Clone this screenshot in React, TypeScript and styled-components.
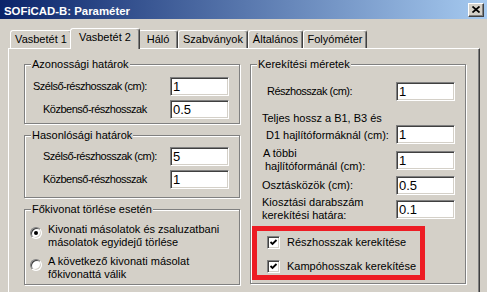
import React, { FC } from "react";
import styled, { createGlobalStyle } from "styled-components";

const GlobalStyle = createGlobalStyle`
  html, body {
    margin: 0;
    padding: 0;
    background: #d4d0c8;
  }
  body {
    font-family: "Liberation Sans", Arial, sans-serif;
    font-size: 11px;
    color: #000;
  }
`;

const Window = styled.div`
  width: 487px;
  height: 292px;
  overflow: hidden;
  background: #d4d0c8;
  display: flex;
  flex-direction: column;
`;

const TitleBar = styled.div`
  flex: none;
  height: 19px;
  display: flex;
  align-items: center;
  justify-content: space-between;
  padding: 0 3px 0 4px;
  background: linear-gradient(to right, #0a246a, #a6caf0);
`;

const Title = styled.span`
  color: #fff;
  font-weight: bold;
  font-size: 11.4px;
  line-height: 13px;
  padding-top: 3px;
`;

const CloseButton = styled.div`
  width: 16px;
  height: 14px;
  box-sizing: border-box;
  display: flex;
  align-items: center;
  justify-content: center;
  background: #d4d0c8;
  border: 1px solid;
  border-color: #fff #404040 #404040 #fff;
  box-shadow: inset -1px -1px 0 #808080;
`;

const TabStrip = styled.div`
  display: flex;
  align-items: flex-end;
  height: 20px;
  margin: 9px 0 0 10px;
`;

const Tab = styled.div<{ $w: number; $active?: boolean }>`
  position: relative;
  z-index: ${(p) => (p.$active ? 2 : 1)};
  box-sizing: border-box;
  width: ${(p) => p.$w + (p.$active ? 4 : 0)}px;
  height: ${(p) => (p.$active ? 21 : 18)}px;
  margin: 0 ${(p) => (p.$active ? -2 : 0)}px ${(p) => (p.$active ? -1 : 0)}px;
  padding-bottom: ${(p) => (p.$active ? 3 : 0)}px;
  display: flex;
  align-items: center;
  justify-content: center;
  white-space: nowrap;
  background: #d4d0c8;
  border: 1px solid;
  border-bottom: none;
  border-color: #fff #404040 transparent #fff;
  border-radius: 3px 3px 0 0;
  box-shadow: inset -1px 0 0 #808080;
  line-height: 13px;
`;

const TabPage = styled.div`
  margin-left: 8px;
  width: 472px;
  box-sizing: border-box;
  border-top: 1px solid #fff;
  border-left: 1px solid #fff;
  border-right: 1px solid #404040;
  box-shadow: inset -1px 0 0 #808080;
  padding: 9px 0 30px 15px;
  display: grid;
  grid-template-columns: 216px 216px;
  column-gap: 10px;
  align-items: start;
`;

const Column = styled.div`
  display: flex;
  flex-direction: column;
`;

const Group = styled.fieldset<{
  $inset: number;
  $right: number;
  $pt: number;
  $pb: number;
  $mt?: number;
}>`
  margin: ${(p) => p.$mt ?? 0}px 0 0;
  min-width: 0;
  padding: ${(p) => `${p.$pt}px ${p.$right}px ${p.$pb}px ${p.$inset}px`};
  border: 1px solid #808080;
  box-shadow: inset 1px 1px 0 #fff, 1px 1px 0 #fff;

  & > legend {
    margin-left: ${(p) => 6 - p.$inset}px;
    padding: 0 1px;
    font-size: 11px;
    line-height: 13px;
    background: #d4d0c8;
  }
`;

const FieldRow = styled.div<{ $mt?: number; $align?: string }>`
  display: flex;
  align-items: ${(p) => p.$align ?? "center"};
  margin-top: ${(p) => p.$mt ?? 0}px;
`;

const Label = styled.div<{
  $indent?: number;
  $lh?: number;
  $pt?: number;
  $tight?: boolean;
}>`
  flex: 1;
  min-width: 0;
  white-space: nowrap;
  padding-left: ${(p) => p.$indent ?? 0}px;
  padding-top: ${(p) => p.$pt ?? 0}px;
  line-height: ${(p) => p.$lh ?? 13}px;
  letter-spacing: ${(p) => (p.$tight ? "-0.5px" : "normal")};
`;

const Line = styled.span<{ $indent?: number }>`
  display: block;
  padding-left: ${(p) => p.$indent ?? 0}px;
`;

const TextBox = styled.div<{ $mt?: number }>`
  flex: none;
  width: 59px;
  height: 19px;
  box-sizing: border-box;
  margin-top: ${(p) => p.$mt ?? 0}px;
  padding: 0 2px 0 2px;
  display: flex;
  align-items: center;
  background: #fff;
  border: 1px solid;
  border-color: #808080 #fff #fff #808080;
  box-shadow: inset 1px 1px 0 #404040, inset -1px -1px 0 #d4d0c8;
  font-size: 13px;
  line-height: 15px;
`;

const RadioRow = styled.div<{ $mt?: number }>`
  display: flex;
  align-items: flex-start;
  gap: 6px;
  margin-top: ${(p) => p.$mt ?? 0}px;
  line-height: 13px;
`;

const RadioDot = styled.span<{ $checked?: boolean }>`
  flex: none;
  width: 12px;
  height: 12px;
  margin-top: 4px;
  box-sizing: border-box;
  border-radius: 50%;
  display: flex;
  align-items: center;
  justify-content: center;
  background: #fff;
  border: 1px solid;
  border-color: #808080 #fff #fff #808080;
  box-shadow: inset 1px 1px 0 #404040, inset -1px -1px 0 #d4d0c8;

  &::after {
    content: "";
    display: ${(p) => (p.$checked ? "block" : "none")};
    width: 4px;
    height: 4px;
    border-radius: 50%;
    background: #000;
  }
`;

const Highlight = styled.div`
  margin: 4px 0 0 -10px;
  width: 173px;
  height: 54px;
  box-sizing: border-box;
  border: 5px solid #ed1c24;
  padding: 2px 0 0 10px;
  display: flex;
  flex-direction: column;
  gap: 6px;
`;

const CheckRow = styled.label`
  display: flex;
  align-items: center;
  gap: 7px;
  height: 18px;
  white-space: nowrap;
`;

const CheckBox = styled.span`
  flex: none;
  width: 13px;
  height: 13px;
  box-sizing: border-box;
  display: flex;
  align-items: center;
  justify-content: center;
  background: #fff;
  border: 1px solid;
  border-color: #808080 #fff #fff #808080;
  box-shadow: inset 1px 1px 0 #404040, inset -1px -1px 0 #d4d0c8;
`;

const tabs = [
  { label: "Vasbetét 1", w: 62 },
  { label: "Vasbetét 2", w: 66, active: true },
  { label: "Háló", w: 40 },
  { label: "Szabványok", w: 70 },
  { label: "Általános", w: 55 },
  { label: "Folyóméter", w: 64 },
];

const CloseIcon: FC = () => (
  <svg width="8" height="7" viewBox="0 0 8 7">
    <path d="M0.5 0.5L7.5 6.5M7.5 0.5L0.5 6.5" stroke="#000" strokeWidth="1.7" />
  </svg>
);

const Check: FC<{ label: string }> = ({ label }) => (
  <CheckRow>
    <CheckBox>
      <svg width="9" height="9" viewBox="0 0 9 9">
        <polyline
          points="1.5,4 3.5,6 7.5,2"
          fill="none"
          stroke="#000"
          strokeWidth="1.8"
        />
      </svg>
    </CheckBox>
    {label}
  </CheckRow>
);

export default function App() {
  return (
    <>
      <GlobalStyle />
      <Window>
        <TitleBar>
          <Title>SOFiCAD-B: Paraméter</Title>
          <CloseButton>
            <CloseIcon />
          </CloseButton>
        </TitleBar>

        <TabStrip>
          {tabs.map((t) => (
            <Tab key={t.label} $w={t.w} $active={t.active}>
              {t.label}
            </Tab>
          ))}
        </TabStrip>

        <TabPage>
          <Column>
            <Group $inset={8} $right={10} $pt={6} $pb={4}>
              <legend>Azonossági határok</legend>
              <FieldRow>
                <Label $tight>Szélső-részhosszak (cm):</Label>
                <TextBox>1</TextBox>
              </FieldRow>
              <FieldRow $mt={4}>
                <Label $indent={10} $tight>
                  Közbenső-részhosszak
                </Label>
                <TextBox>0.5</TextBox>
              </FieldRow>
            </Group>

            <Group $inset={8} $right={10} $pt={5} $pb={8} $mt={5}>
              <legend>Hasonlósági határok</legend>
              <FieldRow>
                <Label $indent={10} $tight>
                  Szélső-részhosszak (cm):
                </Label>
                <TextBox>5</TextBox>
              </FieldRow>
              <FieldRow $mt={4}>
                <Label $indent={10} $tight>
                  Közbenső-részhosszak
                </Label>
                <TextBox>1</TextBox>
              </FieldRow>
            </Group>

            <Group $inset={5} $right={6} $pt={7} $pb={3} $mt={5}>
              <legend>Főkivonat törlése esetén</legend>
              <RadioRow>
                <RadioDot $checked />
                <span>
                  Kivonati másolatok és zsaluzatbani
                  <br />
                  másolatok egyidejű törlése
                </span>
              </RadioRow>
              <RadioRow $mt={6}>
                <RadioDot />
                <span>
                  A következő kivonati másolat
                  <br />
                  főkivonattá válik
                </span>
              </RadioRow>
            </Group>
          </Column>

          <Group $inset={11} $right={10} $pt={11} $pb={3}>
            <legend>Kerekítési méretek</legend>
            <FieldRow>
              <Label $indent={5} $tight>
                Részhosszak (cm):
              </Label>
              <TextBox>1</TextBox>
            </FieldRow>
            <FieldRow $mt={9} $align="flex-end">
              <Label $lh={17}>
                <Line>Teljes hossz a B1, B3 és</Line>
                <Line $indent={4}>D1 hajlítóformáknál (cm):</Line>
              </Label>
              <TextBox>1</TextBox>
            </FieldRow>
            <FieldRow $align="flex-start">
              <Label $pt={3}>
                <Line $indent={1}>A többi</Line>
                <Line $indent={3}>hajlítóformánál (cm):</Line>
              </Label>
              <TextBox $mt={7}>1</TextBox>
            </FieldRow>
            <FieldRow $mt={3}>
              <Label>Osztásközök (cm):</Label>
              <TextBox>0.5</TextBox>
            </FieldRow>
            <FieldRow $mt={1}>
              <Label>
                <Line>Kiosztási darabszám</Line>
                <Line>kerekítési határa:</Line>
              </Label>
              <TextBox>0.1</TextBox>
            </FieldRow>
            <Highlight>
              <Check label="Részhosszak kerekítése" />
              <Check label="Kampóhosszak kerekítése" />
            </Highlight>
          </Group>
        </TabPage>
      </Window>
    </>
  );
}
